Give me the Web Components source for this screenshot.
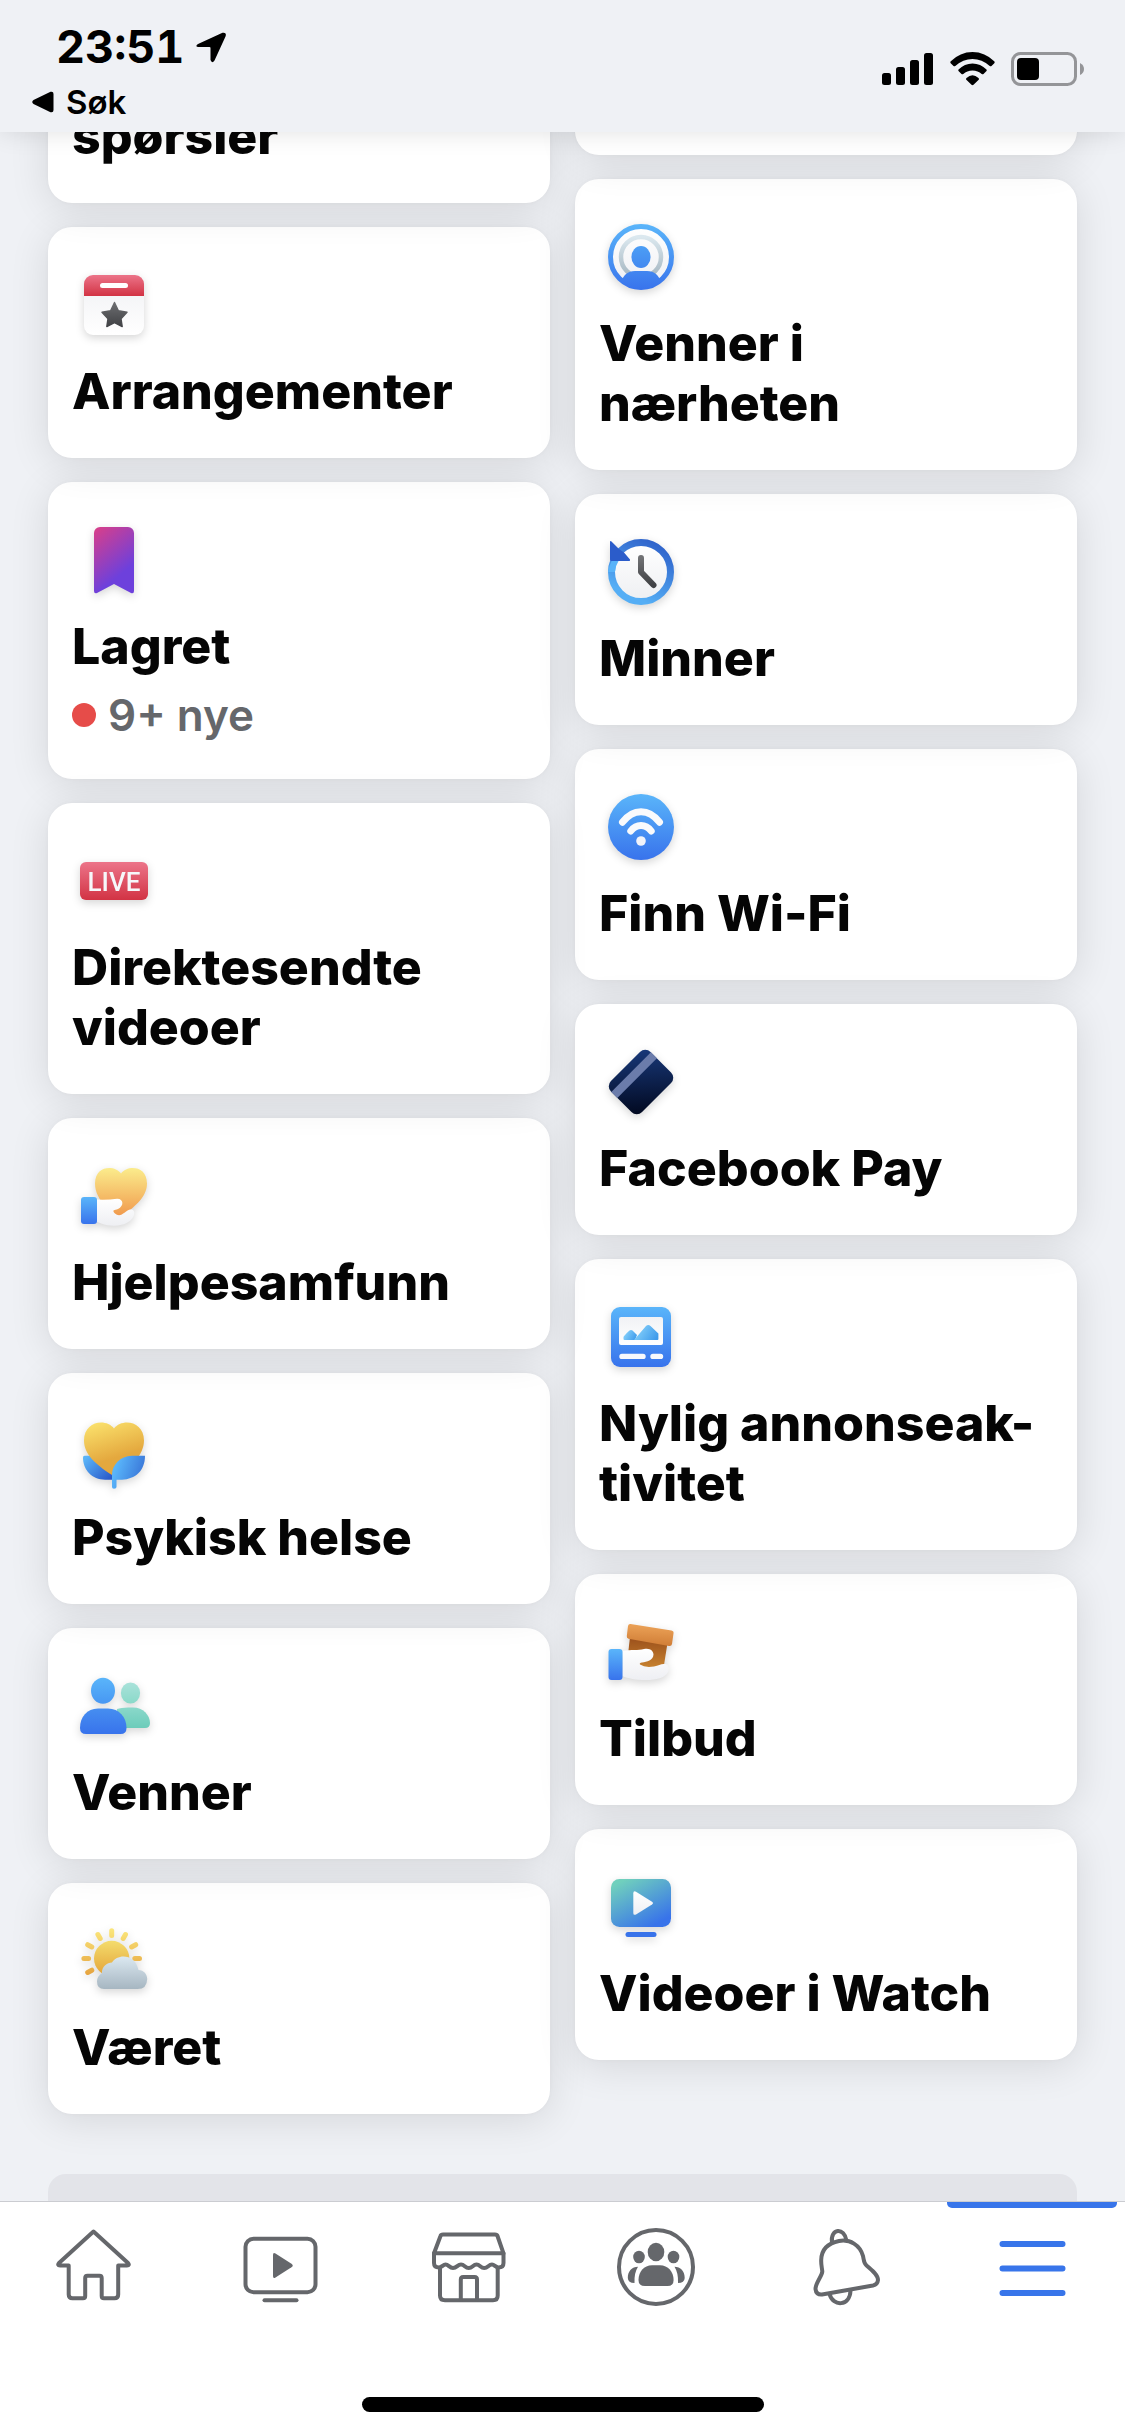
<!DOCTYPE html>
<html lang="nb">
<head>
<meta charset="utf-8">
<meta name="viewport" content="width=device-width, initial-scale=1">
<title>Meny</title>
<style>
body {
    margin: 0;
    background: #eff1f5;
    color: #050505;
    font-family: Inter, "Liberation Sans", sans-serif;
}
</style>
</head>
<body>
<menu-page>
    <status-bar slot="top" time="23:51" back="Søk"></status-bar>

    <card-column slot="left">
        <menu-card continued>spørsler</menu-card>
        <menu-card icon="events">Arrangementer</menu-card>
        <menu-card icon="saved" note="9+ nye">Lagret</menu-card>
        <menu-card icon="live" raised>Direktesendte videoer</menu-card>
        <menu-card icon="help">Hjelpesamfunn</menu-card>
        <menu-card icon="health">Psykisk helse</menu-card>
        <menu-card icon="friends">Venner</menu-card>
        <menu-card icon="weather">Været</menu-card>
    </card-column>

    <card-column slot="right">
        <menu-card continued></menu-card>
        <menu-card icon="nearby">Venner i nærheten</menu-card>
        <menu-card icon="memories">Minner</menu-card>
        <menu-card icon="wifi">Finn Wi-Fi</menu-card>
        <menu-card icon="pay" raised>Facebook Pay</menu-card>
        <menu-card icon="ads">Nylig annonseak-tivitet</menu-card>
        <menu-card icon="offers">Tilbud</menu-card>
        <menu-card icon="watch">Videoer i Watch</menu-card>
    </card-column>

    <tab-bar slot="bottom">
        <tab-item icon="tab-home" label="Hjem"></tab-item>
        <tab-item icon="tab-watch" label="Watch"></tab-item>
        <tab-item icon="tab-market" label="Marketplace"></tab-item>
        <tab-item icon="tab-groups" label="Grupper"></tab-item>
        <tab-item icon="tab-bell" label="Varsler"></tab-item>
        <tab-item icon="tab-menu" label="Meny" active></tab-item>
    </tab-bar>
</menu-page>

<script>
// vertical gradient shorthand used by most of the icons
const grad = (id, from, to, coords = 'x1="0" y1="0" x2="0" y2="1"') =>
    `<linearGradient id="${id}" ${coords}><stop offset="0" stop-color="${from}"/><stop offset="1" stop-color="${to}"/></linearGradient>`;

const blue = grad("blue", "#5ab5fa", "#3873ec");
const red = grad("red", "#ec7489", "#d23344");
const white = grad("white", "#ffffff", "#eeeff3");

// every icon is drawn on an 84 x 84 canvas
const icons = {
    events: `<defs>${red}${grad("paper", "#eff0f3", "#ffffff")}${grad("star", "#6c6d70", "#414245")}</defs>
        <rect x="12" y="12" width="60" height="60" rx="9" fill="url(#paper)"/>
        <path d="M12 33V21a9 9 0 0 1 9-9h42a9 9 0 0 1 9 9v12z" fill="url(#red)"/>
        <rect x="28" y="20" width="28" height="5" rx="2.5" fill="#fff"/>
        <path d="M42.5 39.5l3.9 8.2 8.6 1.5-6 6.5 1.2 7.8-7.7-3.8-7.7 3.8 1.2-7.8-6-6.5 8.6-1.5z" fill="url(#star)" stroke="url(#star)" stroke-width="1.4" stroke-linejoin="round"/>`,
    saved: `<defs>${grad("mark", "#d63f8c", "#6d40dc", 'x1="0.1" y1="0" x2="0.5" y2="0.8"')}</defs>
        <path d="M28 9h28a6 6 0 0 1 6 6v58q0 3-3 2L42 66 25 75q-3 1-3-2V15a6 6 0 0 1 6-6z" fill="url(#mark)"/>`,
    live: `<defs>${red}</defs>
        <rect x="8" y="23" width="68" height="38" rx="6" fill="url(#red)"/>
        <text x="42" y="52" text-anchor="middle" font-family="Roboto, sans-serif" font-weight="500" font-size="26" fill="#f6f7fa">LIVE</text>`,
    help: `<defs>${blue}${white}${grad("heart", "#fbec8c", "#f0964a")}</defs>
        <path d="M49 19.5C55 11 75 11 75 29.5C75 44 61 53 56 58L47 64L36 55C27 46 23 38 23 29.5C23 11 43 11 49 19.5z" fill="url(#heart)"/>
        <path d="M24 45.5Q36 46 45 44.8C51.5 44.5 52.5 52 46 55C42 56.5 41 56.2 41.5 57.5C42 59 44 61 47 61.3C51 61 54 56.5 58 55.5C61 55 63 57 62 61C60 67 53 71.7 42 71.7C33 71.5 27 69 24 67z" fill="url(#white)"/>
        <rect x="9" y="43" width="16" height="27" rx="3" fill="url(#blue)"/>`,
    health: `<defs>${grad("heart", "#fae06b", "#e4a83e", 'x1="0.2" y1="0" x2="0.45" y2="0.7"')}
        ${grad("l1", "#5ab4f8", "#2b5bca", 'x1="0" y1="0.2" x2="0.9" y2="0.9"')}${grad("l2", "#59b5fa", "#366fd4", 'x1="0.1" y1="0.4" x2="1" y2="0.7"')}</defs>
        <path d="M12.5 46.7H42V70.7H33C20 70.7 11 61 11 48.5Q11 46.7 12.5 46.7z" fill="url(#l1)"/>
        <path d="M42 19.5C50 9 72 12 72 31.5C72 46 58 60 44 66H40C23 55 12 45 12 31.5C12 12 34 9 42 19.5z" fill="url(#heart)"/>
        <path d="M73 46.7H60C48 47 40 56 40 66V78Q40 79.7 42 79.7Q44.5 79.7 44.5 78V70.7H50C63 70 73 62 73 46.7z" fill="url(#l2)"/>`,
    friends: `<defs>${grad("h1", "#5ab5fa", "#4797f3")}${grad("b1", "#468ef0", "#3873ec")}${grad("h2", "#a9e2da", "#8ad9c9")}${grad("b2", "#8ad8ca", "#6cccba")}</defs>
        <ellipse cx="58.5" cy="29" rx="9.6" ry="10.6" fill="url(#h2)"/>
        <path d="M45 45Q49 43.4 56 43.4H61C71 43.4 78 51 78 59Q78 64 73 64H45z" fill="url(#b2)"/>
        <ellipse cx="31" cy="26.7" rx="12" ry="13" fill="url(#h1)"/>
        <path d="M26 44.5H36C47 44.5 54.5 53 54.5 64Q54.5 70 48.5 70H14Q8 70 8 64C8 53 15 44.5 26 44.5z" fill="url(#b1)"/>`,
    weather: `<defs>${grad("sun", "#f4dc6d", "#e3a237")}${grad("cloud", "#dbe8f1", "#a6b6c1")}
        ${grad("ray", "#fbe77c", "#e6a540", 'gradientUnits="userSpaceOnUse" x1="0" y1="9" x2="0" y2="55"')}</defs>
        <path d="M39.7 11.7V16.5M53.5 15.5L51.2 19.5M63.7 25.7L59.6 28M67.5 39.5H62.8M25.9 15.5L28.2 19.5M15.7 25.7L19.8 28M11.9 39.5H16.6M15.7 53.5L19.8 51.2" fill="none" stroke="url(#ray)" stroke-width="5" stroke-linecap="round"/>
        <circle cx="39.7" cy="39.5" r="17.7" fill="url(#sun)"/>
        <path d="M32 70Q25 70 25 62.5Q25 57 30 54C29.5 48 35 43.5 40 43.5C45 35 63 34 66.5 51C72 51 75.2 55.5 75.2 60Q75 70 65.5 70z" fill="url(#cloud)"/>`,
    nearby: `<defs>${white}${grad("ring", "#dbe8ef", "#a5b6c1")}${grad("head", "#4c9ef5", "#4389f0")}
        ${grad("u", "#5ab5fa", "#3873ec", 'gradientUnits="userSpaceOnUse" x1="0" y1="9" x2="0" y2="75"')}
        <clipPath id="c"><circle cx="42" cy="42" r="32"/></clipPath></defs>
        <circle cx="42" cy="42" r="31" fill="url(#white)"/>
        <circle cx="42" cy="42" r="20" fill="none" stroke="url(#ring)" stroke-width="4.5"/>
        <ellipse cx="42" cy="42" rx="9.6" ry="11" fill="url(#head)"/>
        <path d="M22 68Q25 56 36 56H48Q59 56 62 68V80H22z" fill="url(#u)" clip-path="url(#c)"/>
        <circle cx="42" cy="42" r="30.5" fill="none" stroke="url(#u)" stroke-width="5"/>`,
    memories: `<defs>${grad("face", "#ffffff", "#eeeff2")}${grad("hand", "#707174", "#414245")}
        ${grad("m", "#55aef5", "#2f63cb", 'gradientUnits="userSpaceOnUse" x1="22" y1="60" x2="48" y2="8"')}</defs>
        <circle cx="42" cy="42" r="29" fill="url(#face)"/>
        <circle cx="42" cy="42" r="29.5" fill="none" stroke="url(#m)" stroke-width="7"/>
        <path d="M12.7 31A31 31 0 0 0 9 42L16 42A27 27 0 0 1 20 30z" fill="#58b3f9"/>
        <path d="M11 12Q11 10.5 12.5 11.5L20 19L25 22.5L31 29.5Q31.5 31 30 31H12.5Q11 31 11 29.5z" fill="#2b5cca"/>
        <path d="M42 28V42L54.5 55" fill="none" stroke="url(#hand)" stroke-width="6" stroke-linecap="round" stroke-linejoin="round"/>`,
    wifi: `<defs>${blue}</defs>
        <circle cx="42" cy="42" r="33" fill="url(#blue)"/>
        <path d="M23.5 37.2Q31.5 26.7 42 26.7T60.5 37.2M31.8 46Q36 40.5 42 40.5T52.2 46" fill="none" stroke="#f9fafc" stroke-width="7" stroke-linecap="round"/>
        <circle cx="42" cy="56" r="4.8" fill="#f1f3fa"/>`,
    pay: `<defs>${grad("card", "#183879", "#020a22", 'gradientUnits="userSpaceOnUse" x1="22" y1="-24" x2="-20" y2="24"')}</defs>
        <g transform="translate(42 42) rotate(-45)">
            <rect x="-28" y="-22" width="56" height="44" rx="7.5" fill="url(#card)"/>
            <rect x="-28" y="-14" width="56" height="8.5" fill="#6b7cab"/>
        </g>`,
    ads: `<defs>${blue}${grad("screen", "#f1f2f5", "#ffffff")}${grad("hill", "#8bd5fc", "#3f9beb", 'x1="0" y1="0.3" x2="1" y2="0.7"')}</defs>
        <rect x="12" y="12" width="60" height="60" rx="9" fill="url(#blue)"/>
        <rect x="20" y="22" width="44" height="28" rx="2" fill="url(#screen)"/>
        <path d="M24.5 44V42Q24.5 41 30.5 35.5Q32 34.3 33.5 35.5L38 40L36 45H25.5Q24.5 45 24.5 44z" fill="url(#hill)"/>
        <path d="M35 45L47 31Q49.3 28.8 51.5 31L59.4 38.5V44Q59.4 45 58.5 45z" fill="url(#hill)"/>
        <path d="M23 61.4H44M54 61.4H61.5" stroke="#f7f8fc" stroke-width="5.4" stroke-linecap="round"/>`,
    offers: `<defs>${blue}${white}${grad("lid", "#eda459", "#cf7c35", 'x1="0.6" y1="0" x2="0.5" y2="1"')}${grad("box", "#9a4f1b", "#ca8530")}</defs>
        <path d="M31 27L68.5 33L65 55Q58 60 50 60L34 56L29.5 40z" fill="url(#box)"/>
        <path d="M31.5 14L72.5 20.5Q75 21 74.5 23.5L73 34Q72.5 36.5 70 36L29.5 28.7Q27.5 28 27.8 26L29 16Q29.5 13.7 31.5 14z" fill="url(#lid)"/>
        <path d="M23.5 41C33 39.5 39 40.5 45 39C51 37.5 54.5 41 54.5 44.5C54 51 48 51.5 43 52.5Q40 53 41 54.5Q46 58 55 56.5C60 55.5 62 53.5 66 54C70 54.5 70.5 59 69 62C66 68 57 70 47 70C37 70 29 68.5 23.5 66z" fill="url(#white)"/>
        <rect x="9.5" y="39" width="14" height="31" rx="3" fill="url(#blue)"/>`,
    watch: `<defs>${white}${grad("tv", "#70d0bd", "#3873ea", 'x1="0.15" y1="0.06" x2="0.75" y2="0.94"')}</defs>
        <rect x="12" y="14" width="60" height="48" rx="8.5" fill="url(#tv)"/>
        <path d="M34.3 28.5Q34.3 25.5 37 26.7L53 36.7Q55 38 53 39.5L37 49.5Q34.3 50.7 34.3 48z" fill="url(#white)"/>
        <rect x="26.5" y="67" width="31" height="5" rx="2.5" fill="#3873ea"/>`,

    "tab-home": `<g fill="none" stroke="#65676b" stroke-width="4" stroke-linejoin="round">
        <path d="M41.5 8.5L7 40Q5 42.5 8 42.5H16.7V71.5Q16.7 75.3 20.5 75.3H31Q33.2 75.3 33.2 73V55Q33.2 52.7 35.5 52.7H47.5Q49.7 52.7 49.7 55V73Q49.7 75.3 52 75.3H62.5Q66.2 75.3 66.2 71.5V42.5H75Q78 42.5 76 40z"/></g>`,
    "tab-watch": `<rect x="6.5" y="15.7" width="70" height="53.5" rx="8" fill="none" stroke="#65676b" stroke-width="4"/>
        <path d="M34 32Q34 29 36.5 30.5L52.5 40.7Q55 42.5 52.5 44.3L36.5 54.5Q34 56 34 53z" fill="#65676b"/>
        <path d="M25.5 77.3H57.5" stroke="#65676b" stroke-width="4" stroke-linecap="round"/>`,
    "tab-market": `<g fill="none" stroke="#65676b" stroke-width="4" stroke-linejoin="round" stroke-linecap="round">
        <path d="M7 30.3L13.5 13Q14 11.5 16 11.5H68Q70 11.5 70.5 13L76.5 30.3z"/>
        <path d="M7 30.3V40Q7 44.5 12 44.5C15 44.5 16 41.5 18.5 41.5C21.5 41.5 22.5 45 26 45C30 45 30.5 41.5 34 41.5C37.5 41.5 38 45 41.7 45C45.5 45 46 41.5 49.5 41.5C53 41.5 53.5 45 57.2 45C61 45 61.5 41.5 65 41.5C67.5 41.5 68.5 44.5 71.5 44.5Q76.5 44.5 76.5 40V30.3"/>
        <path d="M13 45V72.5Q13 77.3 18 77.3H66Q70.7 77.3 70.7 72.5V45"/>
        <path d="M33.8 77V56.5Q33.8 54 36.3 54H47.5Q50 54 50 56.5V77"/></g>`,
    "tab-groups": `<circle cx="42" cy="44" r="37" fill="none" stroke="#65676b" stroke-width="4"/>
        <g fill="#65676b"><ellipse cx="42" cy="29" rx="8.3" ry="9.3"/><ellipse cx="25" cy="34" rx="5.8" ry="6.3"/><ellipse cx="59.5" cy="34" rx="5.8" ry="6.3"/>
        <path d="M38 42.3H46C54 42.3 59.6 49 59.6 57Q59.6 63 53.5 63H31Q24.5 63 24.5 57C24.5 49 30 42.3 38 42.3z"/>
        <path d="M24 43.7C18 43.7 13.8 48 13.8 55Q14 60 20.5 60Q20 50 24 43.7zM60.5 43.7C66.5 43.7 70.7 48 70.7 55Q70.5 60 64 60Q64.5 50 60.5 43.7z"/></g>`,
    "tab-bell": `<g fill="none" stroke="#65676b" stroke-width="4" stroke-linejoin="round">
        <path d="M30 19.5C28 5 42.5 4 44.5 17.5"/>
        <path d="M37 18C48 16 58 22 61 33C62 37 61.5 40 64.5 42.5C70 47 76 52 76 57Q75.5 61.5 71 62.5L20 71.5Q14 72 13.5 66C13.5 60 20 53 20.3 48.5C20 45 19 42 19.2 37C19.5 26 27 20 37 18z"/>
        <path d="M27.5 71C31 84 48 83.5 48.5 67.5"/></g>`,
    "tab-menu": `<path d="M13.5 21H73.5M13.5 45.5H73.5M13.5 70H73.5" stroke="#3875ea" stroke-width="6" stroke-linecap="round"/>`
};

class menuIcon extends HTMLElement {
    connectedCallback() {
        this.attachShadow({ mode: "open" });
        this.shadowRoot.innerHTML = `
        <style>
        :host { display: block; width: 84px; height: 84px; }
        :host([shaded]) svg { filter: drop-shadow(0 3px 4px rgba(0, 0, 0, 0.16)); }
        svg { display: block; overflow: visible; }
        </style>
        <svg width="84" height="84" viewBox="0 0 84 84" aria-hidden="true">${icons[this.getAttribute("name")]}</svg>`;
    }
}

const statusBarTemplate = document.createElement("template");
statusBarTemplate.innerHTML = `
<style>
:host {
    display: flex;
    justify-content: space-between;
    position: relative;
    z-index: 2;
    padding: 20px 41px 10px 32px;
    background: #eff1f5;
    box-shadow: 0 0 24px rgba(0, 0, 0, 0.12);
    color: #000;
    font-weight: 600;
}

.left { display: flex; flex-direction: column; gap: 8px; }
.time { display: flex; align-items: center; gap: 12px; padding-left: 24px; font-size: 45px; line-height: 54px; font-weight: 700; font-variant-numeric: tabular-nums; }
.back { display: flex; align-items: center; gap: 12px; color: inherit; text-decoration: none; font-size: 33px; line-height: 40px; }
.signals { display: flex; gap: 16px; margin-top: 32px; }
svg { display: block; }
</style>

<div class="left">
    <div class="time">
        <span></span>
        <svg width="30" height="31" viewBox="0 0 30 31"><path d="M2 12L26.5 0.8Q31 0 29.5 4.5L18.5 28.5Q16 32 14.5 28V16Q14.5 15 13.5 15H2.5Q-1.5 14.5 2 12z"/></svg>
    </div>
    <a class="back" href="#">
        <svg width="22" height="22" viewBox="0 0 22 22"><path d="M1.5 9L18.5 0.8Q21.5 0 21.5 3V19Q21.5 22 18.5 21.2L1.5 13Q-1 11 1.5 9z"/></svg>
        <span></span>
    </a>
</div>
<div class="signals">
    <svg width="52" height="34" viewBox="0 0 52 34"><rect y="21" width="9" height="12" rx="2.5"/><rect x="14" y="15" width="9" height="18" rx="2.5"/><rect x="28" y="8" width="9" height="25" rx="2.5"/><rect x="42" y="1" width="9" height="32" rx="2.5"/></svg>
    <svg width="45" height="34" viewBox="0 0 45 34"><path d="M0.5 9.5Q10 0 22.5 0T44.5 9.5Q45 10.5 44.3 11.2L41.5 14Q40.5 14.7 39.7 14Q32 7 22.5 7T5.3 14Q4.5 14.7 3.5 14L0.7 11.2Q0 10.5 0.5 9.5zM8.5 17.5Q14.5 11.5 22.5 11.5T36.5 17.5Q37 18.5 36.5 19L33.5 22Q32.5 22.7 31.7 22Q28 18.5 22.5 18.5T13.3 22Q12.5 22.7 11.5 22L8.5 19Q8 18.5 8.5 17.5zM16.5 26Q22.5 20.5 28.5 26Q29.5 27 28.7 27.8L23.5 32.8Q22.5 33.5 21.5 32.8L16.3 27.8Q15.5 27 16.5 26z"/></svg>
    <svg width="73" height="34" viewBox="0 0 73 34"><rect x="1.5" y="1.5" width="63" height="31" rx="8" fill="none" stroke="#949598" stroke-width="3"/><rect x="6" y="6" width="22" height="22" rx="4"/><path d="M69 11Q73 13 73 17T69 23z" fill="#949598"/></svg>
</div>
`;

class statusBar extends HTMLElement {
    connectedCallback() {
        this.attachShadow({ mode: "open" });
        this.shadowRoot.append(statusBarTemplate.content.cloneNode(true));
        this.shadowRoot.querySelector(".time span").textContent = this.getAttribute("time");
        this.shadowRoot.querySelector(".back span").textContent = this.getAttribute("back");
    }
}

const menuCardTemplate = document.createElement("template");
menuCardTemplate.innerHTML = `
<style>
:host {
    display: block;
    position: relative;
    border-radius: 24px;
    background: #fff;
    box-shadow: 0 6px 40px rgba(0, 0, 0, 0.11), 0 0 4px rgba(0, 0, 0, 0.03);
}

a {
    display: flex;
    flex-direction: column;
    box-sizing: border-box;
    min-height: 49px;
    padding: 36px 24px 37px;
    color: inherit;
    text-decoration: none;
}

:host([continued]) { border-radius: 0 0 24px 24px; }
:host([continued]) a { padding-top: 0; }

menu-icon { margin-bottom: 14px; }
.title { font-size: 50px; line-height: 60px; font-weight: 800; }
.note { display: flex; align-items: center; gap: 12px; margin-top: 12px; color: #65676b; font-size: 44px; line-height: 54px; font-weight: 600; }
.note::before { content: ""; width: 24px; height: 24px; border-radius: 50%; background: #e64c49; }
</style>

<a href="#">
    <span class="title"><slot></slot></span>
</a>
`;

class menuCard extends HTMLElement {
    connectedCallback() {
        this.attachShadow({ mode: "open" });
        this.shadowRoot.append(menuCardTemplate.content.cloneNode(true));

        const link = this.shadowRoot.querySelector("a");
        if (this.hasAttribute("icon")) {
            const icon = document.createElement("menu-icon");
            icon.setAttribute("name", this.getAttribute("icon"));
            icon.setAttribute("shaded", "");
            link.prepend(icon);
        }

        if (this.hasAttribute("note")) {
            const note = document.createElement("span");
            note.className = "note";
            note.textContent = this.getAttribute("note");
            link.append(note);
        }

        // each card drops its shadow on the one below, raised cards lie over both neighbours
        const index = [...this.parentElement.children].indexOf(this);
        this.style.zIndex = this.hasAttribute("raised") ? 20 : 10 - index;
    }
}

class cardColumn extends HTMLElement {
    connectedCallback() {
        this.attachShadow({ mode: "open" });
        this.shadowRoot.innerHTML = `
        <style>
        :host { display: flex; flex-direction: column; gap: 24px; min-width: 0; }
        </style>
        <slot></slot>`;
    }
}

class tabItem extends HTMLElement {
    connectedCallback() {
        this.attachShadow({ mode: "open" });
        this.shadowRoot.innerHTML = `
        <style>
        :host { display: block; flex: 1; position: relative; }
        a { display: flex; justify-content: center; padding: 21px 0; }
        :host([active])::before {
            content: "";
            position: absolute;
            top: 0;
            left: 9px;
            right: 8px;
            height: 6px;
            border-radius: 0 0 5px 5px;
            background: #3875ea;
        }
        </style>
        <a href="#" aria-label="${this.getAttribute("label")}"><menu-icon name="${this.getAttribute("icon")}"></menu-icon></a>`;
    }
}

class tabBar extends HTMLElement {
    connectedCallback() {
        this.attachShadow({ mode: "open" });
        this.shadowRoot.innerHTML = `
        <style>
        :host { display: block; position: relative; z-index: 2; background: #fff; border-top: 1px solid #cbccd1; }
        nav { display: flex; }
        .home { width: 402px; max-width: 40%; height: 15px; margin: 69px auto 24px; border-radius: 8px; background: #000; }
        </style>
        <nav><slot></slot></nav>
        <div class="home"></div>`;
    }
}

class menuPage extends HTMLElement {
    connectedCallback() {
        this.attachShadow({ mode: "open" });
        this.shadowRoot.innerHTML = `
        <style>
        :host { display: flex; flex-direction: column; height: 100vh; }
        main { flex: 1; min-height: 0; display: flex; flex-direction: column; overflow: hidden; padding: 0 48px; }
        .columns { display: grid; grid-template-columns: 1fr 1fr; column-gap: 25px; align-items: start; margin-top: -26px; isolation: isolate; }
        .more { flex: 1; margin-top: 60px; border-radius: 18px 18px 0 0; background: #e3e4e9; }
        </style>
        <slot name="top"></slot>
        <main>
            <div class="columns"><slot name="left"></slot><slot name="right"></slot></div>
            <div class="more"></div>
        </main>
        <slot name="bottom"></slot>`;
    }
}

window.customElements.define("menu-icon", menuIcon);
window.customElements.define("status-bar", statusBar);
window.customElements.define("menu-card", menuCard);
window.customElements.define("card-column", cardColumn);
window.customElements.define("tab-item", tabItem);
window.customElements.define("tab-bar", tabBar);
window.customElements.define("menu-page", menuPage);
</script>
</body>
</html>
